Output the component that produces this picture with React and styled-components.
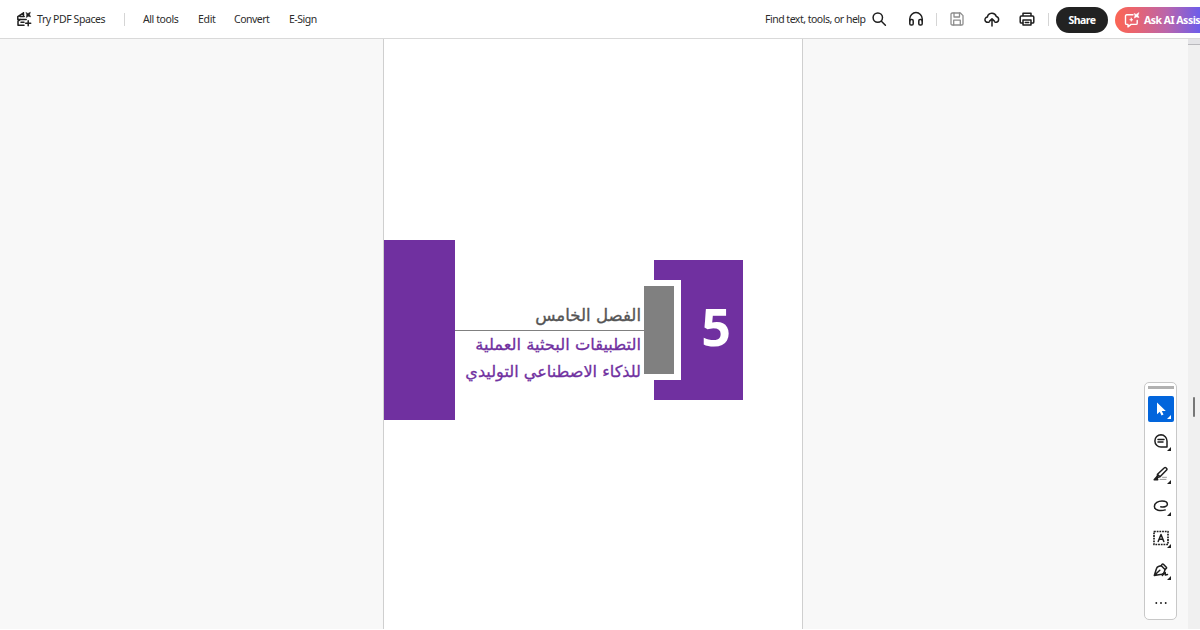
import React from 'react';
import styled, { createGlobalStyle } from 'styled-components';

const GlobalStyle = createGlobalStyle`
  * {
    box-sizing: border-box;
  }
  body {
    margin: 0;
    overflow: hidden;
    font-family: 'Noto Sans', 'Open Sans', sans-serif;
  }
`;

const Window = styled.div`
  position: relative;
  display: flex;
  flex-direction: column;
  width: 1200px;
  height: 630px;
  overflow: hidden;
  background: #ffffff;
`;

const TopBar = styled.header`
  display: flex;
  align-items: center;
  flex: none;
  height: 39px;
  padding-left: 16px;
  background: #ffffff;
  border-bottom: 1px solid #d9d9d9;
`;

const Label = styled.span`
  flex: none;
  width: ${props => props.$width}px;
  margin-left: ${props => props.$gap || 0}px;
  font-size: 10.5px;
  line-height: 16px;
  letter-spacing: ${props => props.$spacing || '-0.3px'};
  white-space: nowrap;
  color: #2c2c2c;
`;

const Divider = styled.span`
  flex: none;
  width: 1px;
  height: 13px;
  margin-left: ${props => props.$gap}px;
  background: #d5d5d5;
`;

const Icon = styled.svg`
  flex: none;
  display: block;
  width: ${props => props.$size || 16}px;
  height: ${props => props.$size || 16}px;
  margin-left: ${props => props.$gap || 0}px;
  fill: none;
  stroke: ${props => props.$color || '#1f1f1f'};
  stroke-width: 1.5;
  stroke-linecap: round;
  stroke-linejoin: round;
`;

const ShareButton = styled.button`
  flex: none;
  width: 52px;
  height: 26px;
  margin: 1px 0 0 7px;
  padding: 0;
  border: 0;
  border-radius: 13px;
  background: #222222;
  color: #ffffff;
  font: 700 10.5px 'Noto Sans', sans-serif;
  letter-spacing: -0.5px;
`;

const AssistantButton = styled.button`
  display: flex;
  align-items: center;
  flex: none;
  width: 120px;
  height: 26px;
  margin: 1px 0 0 7px;
  padding: 0 0 0 9px;
  border: 0;
  border-radius: 13px;
  background: linear-gradient(90deg, #fb6554 0, #e9646f 20px, #b965ac 52px, #665cf0 88px);
  color: #ffffff;
  font: 700 10.5px 'Noto Sans', sans-serif;
  letter-spacing: -0.5px;
  white-space: nowrap;
`;

const AssistantText = styled.span`
  margin-left: 4px;
`;

const Workspace = styled.main`
  display: flex;
  flex: none;
  height: 590px;
  padding-left: 383px;
  background: #f8f8f8;
`;

const Page = styled.article`
  width: 420px;
  height: 590px;
  padding-top: 201px;
  background: #ffffff;
  border-left: 1px solid #cfcfcf;
  border-right: 1px solid #cfcfcf;
`;

const Chapter = styled.section`
  display: flex;
  align-items: center;
  height: 180px;
`;

const SideBlock = styled.div`
  width: 71px;
  height: 180px;
  background: #7030a0;
`;

const Titles = styled.div`
  width: 189px;
  height: 180px;
  padding-top: 61px;
  direction: rtl;
  font-family: 'DejaVu Sans', sans-serif;
  white-space: nowrap;
`;

const ChapterName = styled.h2`
  height: 30px;
  margin: 0;
  padding-right: 3px;
  border-bottom: 1px solid #808080;
  font-size: 16.6px;
  font-weight: 400;
  line-height: 29px;
  color: #555555;
  -webkit-text-stroke: 0.35px #555555;
`;

const TitleLine = styled.p`
  height: 27px;
  margin: 0;
  padding-right: 3px;
  font-size: ${props => props.$size}px;
  line-height: 28px;
  color: #7030a0;
  -webkit-text-stroke: 0.3px #7030a0;
`;

const NumberBlock = styled.div`
  position: relative;
  display: flex;
  align-items: center;
  justify-content: flex-end;
  width: 89px;
  height: 140px;
  margin-left: 10px;
  padding: 0 12px 8px 0;
  background: #7030a0;
  color: #ffffff;
  font: 700 52px/60px 'Noto Sans', sans-serif;
`;

const Bracket = styled.div`
  position: absolute;
  top: 20px;
  left: -10px;
  width: 37px;
  height: 100px;
  padding: 6px 7px 6px 0;
  background: #ffffff;
`;

const BracketFill = styled.div`
  height: 88px;
  background: #808080;
`;

const ScrollTrack = styled.aside`
  display: flex;
  flex-direction: column;
  align-items: center;
  width: 12px;
  margin-left: auto;
  background: #f0f0f0;
`;

const ScrollCap = styled.div`
  width: 12px;
  height: 6px;
  background: #e4e4e7;
  border-bottom: 1px solid #b9b9bd;
`;

const ScrollThumb = styled.div`
  width: 2px;
  height: 20px;
  margin-top: 352px;
  border-radius: 1px;
  background: #777777;
`;

const Palette = styled.nav`
  position: absolute;
  top: 382px;
  left: 1144px;
  display: flex;
  flex-direction: column;
  align-items: center;
  width: 33px;
  height: 238px;
  background: #ffffff;
  border: 1px solid #c8c8c8;
  border-radius: 5px;
`;

const Grip = styled.div`
  flex: none;
  width: 26px;
  height: 3px;
  margin: 3px 0 7px;
  background: #b1b1b1;
`;

const Tool = styled.button`
  position: relative;
  display: flex;
  align-items: center;
  justify-content: center;
  flex: none;
  width: 26px;
  height: 26px;
  margin: 0 0 6.3px;
  padding: 0;
  border: 0;
  border-radius: 2px;
  background: ${props => (props.$active ? '#0265dc' : 'transparent')};

  &::after {
    content: '';
    position: absolute;
    right: 3px;
    bottom: 3px;
    border-left: 4px solid transparent;
    border-bottom: 4px solid ${props => (props.$active ? '#ffffff' : '#1f1f1f')};
    display: ${props => (props.$plain ? 'none' : 'block')};
  }
`;

const SpacesIcon = () => (
  <Icon viewBox="0 0 16 16">
    <path d="M7.5 1.800 1.800 5.600v2.800h8.400M4 5.400h4.200M2 10.200v4h6M4.600 8.400 2 10.200M7.500 1.800v3M5 11.200h3" />
    <path d="M12.200 9.800v5M9.700 12.300h5" />
    <path d="m10.200 1.600 1.700.9 2.500-1.300-.8 2.400 1 2.300-2.200-.6-2.100 1.200.4-2.500z" fill="#1f1f1f" strokeWidth=".5" />
  </Icon>
);

const SearchIcon = () => (
  <Icon viewBox="0 0 16 16" $gap={4}>
    <circle cx="6.8" cy="6.6" r="4.7" />
    <path d="m10.400 10.200 4 4" />
  </Icon>
);

const HeadphonesIcon = () => (
  <Icon viewBox="0 0 16 16" $gap={21}>
    <path d="M1.800 10V7.800a6.200 6.200 0 0 1 12.400 0V10" />
    <rect x="1.800" y="8.500" width="3.400" height="5.500" rx="1.300" />
    <rect x="10.800" y="8.500" width="3.400" height="5.500" rx="1.300" />
  </Icon>
);

const SaveIcon = () => (
  <Icon viewBox="0 0 16 16" $gap={12} $color="#8e8e8e">
    <path d="M3.200 2h8.200L14 4.600v8.200c0 .7-.5 1.200-1.200 1.200H3.200c-.7 0-1.200-.5-1.200-1.200V3.200C2 2.500 2.500 2 3.200 2Z" strokeWidth="1.300" />
    <path d="M5 2v4h5.500V2M4.700 14V9.200h6.600V14" strokeWidth="1.300" />
  </Icon>
);

const UploadIcon = () => (
  <Icon viewBox="0 0 16 16" $gap={19}>
    <path d="M5 11.300H3.700a2.600 2.600 0 0 1-.3-5.200 4.600 4.600 0 0 1 8.900-.6 3 3 0 0 1 .2 5.800H11" />
    <path d="M8 15V8M5.600 10.100 8 7.700l2.400 2.400" />
  </Icon>
);

const PrintIcon = () => (
  <Icon viewBox="0 0 16 16" $gap={19}>
    <path d="M4 5V2.300h8V5M3.800 12H2.300c-.7 0-1.100-.4-1.100-1.100V6.200c0-.7.4-1.200 1.100-1.200h11.400c.7 0 1.100.5 1.100 1.200v4.700c0 .7-.4 1.100-1.100 1.100h-1.500" />
    <path d="M4 9h8v5H4zM6.300 11.500h3.400" />
  </Icon>
);

const ChatSparkIcon = () => (
  <Icon viewBox="0 0 16 16" $color="#ffffff">
    <path d="M9 2.800H2.700c-.7 0-1.200.5-1.200 1.200v7.200c0 .7.500 1.200 1.200 1.200H4v2.500l3-2.500h5c.7 0 1.200-.5 1.200-1.200V8.500" strokeWidth="1.400" />
    <path d="m10.400 1.500 1.700.9L15 .6l-1 2.800 1 2.200-2.600-.7-2.100 1.200.6-2.300zM7.300 6l.5 1.200 1.200.5-1.200.5-.5 1.200-.5-1.200-1.200-.5 1.200-.5z" fill="#ffffff" strokeWidth=".5" />
  </Icon>
);

const tools = [
  {
    name: 'Select',
    active: true,
    icon: <path d="M4 1.500v11.800l2.800-2.600 1.700 3.800 2-.9-1.700-3.700h4z" fill="#ffffff" stroke="none" />,
  },
  {
    name: 'Comment',
    icon: (
      <>
        <path d="M8 1.800a6.100 6.100 0 1 0 0 12.200h6V8A6.100 6.100 0 0 0 8 1.800Z" />
        <path d="M5 6.500h6M5 9h5" />
      </>
    ),
  },
  {
    name: 'Highlight',
    icon: (
      <>
        <path d="m4.500 8.300 6.900-6.500c.5-.5 1-.5 1.500 0l.7.700c.5.500.5 1 0 1.500L7 10.800l-2.800.6zM4.500 8.300l2.400 2.500" />
        <path d="m3.800 10.800-2.600 2.900h3.500z" fill="#1f1f1f" />
        <path d="M7 13.400h6M9.500 11.300h4" stroke="#999999" strokeWidth="1" />
      </>
    ),
  },
  {
    name: 'Draw',
    icon: <path d="M12.200 11.900C7.500 13.400 1.400 12.300 1.400 8.400 1.400 5 5.200 3 9 3c3.200 0 5.400 1.300 5.400 3.200 0 2-2.900 3.300-6.600 2.600" />,
  },
  {
    name: 'Text',
    icon: (
      <>
        <rect x="1" y="1.500" width="14" height="13" strokeDasharray="1.800 .9" strokeLinecap="butt" strokeWidth="1.700" />
        <path d="M5.200 11.500 8 4.500l2.800 7M6.200 9.300h3.600" />
      </>
    ),
  },
  {
    name: 'Sign',
    icon: (
      <>
        <path d="M1.300 13.400 3.500 6.500c.3-1.100 1.400-1.900 2.500-2.200l2.300-.6 3.700 3.900-.7 2.300c-.4 1.300-1.300 2-2.600 2.300zM1.500 13.200l5.300-5" />
        <path d="m8.200 3.700 1-1.500c.3-.4.800-.4 1.200 0l2.900 3c.4.400.4.900 0 1.200L12 7.500M9.300 13.400l2.900-2.900.2 2.600 2.100-.5" />
      </>
    ),
  },
  {
    name: 'More',
    plain: true,
    icon: <path d="M3.300 8h.01M8 8h.01M12.700 8h.01" strokeWidth="1.900" />,
  },
];

function Toolbar() {
  return (
    <TopBar>
      <SpacesIcon />
      <Label $gap={5} $width={68} $spacing="-0.42px">Try PDF Spaces</Label>
      <Divider $gap={19} />
      <Label $gap={18} $width={36} $spacing="-0.42px">All tools</Label>
      <Label $gap={19} $width={18}>Edit</Label>
      <Label $gap={18} $width={35} $spacing="-0.5px">Convert</Label>
      <Label $gap={20} $width={28} $spacing="-0.5px">E-Sign</Label>
      <Label $gap={448} $width={102} $spacing="-0.5px">Find text, tools, or help</Label>
      <SearchIcon />
      <HeadphonesIcon />
      <Divider $gap={12} />
      <SaveIcon />
      <UploadIcon />
      <PrintIcon />
      <Divider $gap={13} />
      <ShareButton>Share</ShareButton>
      <AssistantButton>
        <ChatSparkIcon />
        <AssistantText>Ask AI Assistant</AssistantText>
      </AssistantButton>
    </TopBar>
  );
}

function App() {
  return (
    <Window>
      <GlobalStyle />
      <Toolbar />
      <Workspace>
        <Page>
          <Chapter>
            <SideBlock />
            <Titles lang="ar">
              <ChapterName>الفصل الخامس</ChapterName>
              <TitleLine $size={16.3}>التطبيقات البحثية العملية</TitleLine>
              <TitleLine $size={16.1}>للذكاء الاصطناعي التوليدي</TitleLine>
            </Titles>
            <NumberBlock>
              <Bracket>
                <BracketFill />
              </Bracket>
              5
            </NumberBlock>
          </Chapter>
        </Page>
        <ScrollTrack>
          <ScrollCap />
          <ScrollThumb />
        </ScrollTrack>
      </Workspace>
      <Palette>
        <Grip />
        {tools.map(tool => (
          <Tool key={tool.name} $active={tool.active} $plain={tool.plain} aria-label={tool.name}>
            <Icon viewBox="0 0 16 16">{tool.icon}</Icon>
          </Tool>
        ))}
      </Palette>
    </Window>
  );
}

export default App;
